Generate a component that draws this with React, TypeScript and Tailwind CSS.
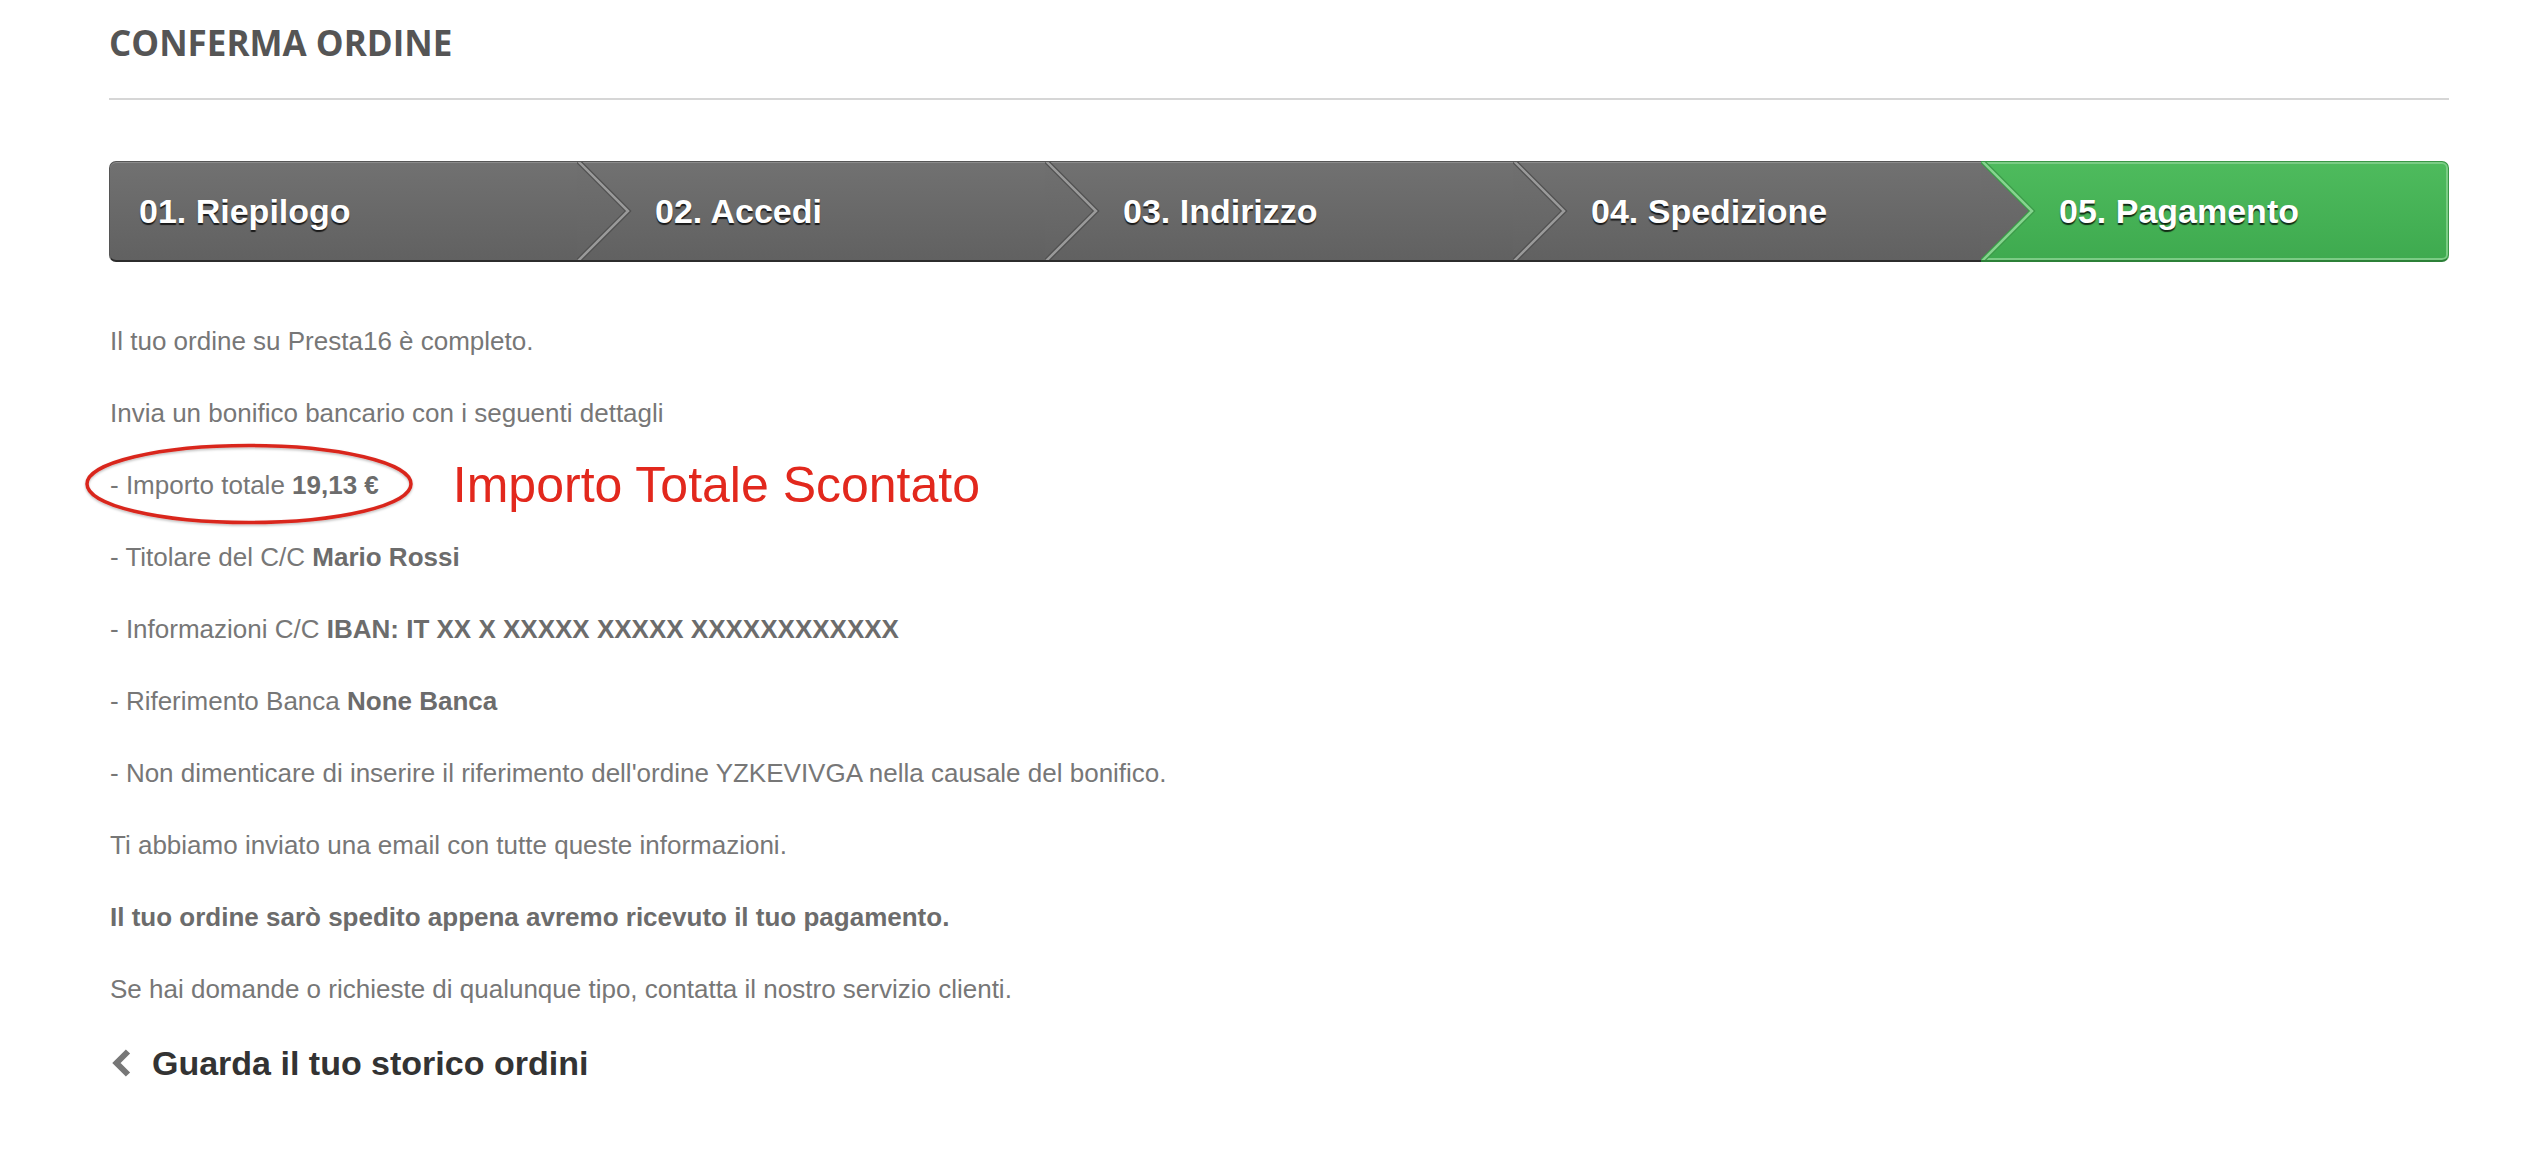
import React from "react";

const steps = ["01. Riepilogo", "02. Accedi", "03. Indirizzo", "04. Spedizione", "05. Pagamento"];

function Chevron({ idx, intoGreen }: { idx: number; intoGreen: boolean }) {
  const gid = `chev-grad-${idx}`;
  return (
    <svg
      className="absolute top-0 right-[-56px] z-10 h-full w-[56px]"
      viewBox="0 0 56 98"
      preserveAspectRatio="none"
    >
      <defs>
        <linearGradient id={gid} x1="0" y1="0" x2="0" y2="1">
          <stop offset="0" stopColor="#707070" />
          <stop offset="1" stopColor="#626262" />
        </linearGradient>
      </defs>
      <polygon points="0,0 51,49 0,98" fill={`url(#${gid})`} />
      <polyline
        points="0,-2 51,49 0,100"
        fill="none"
        stroke={intoGreen ? "#3b9a48" : "#505050"}
        strokeWidth="5"
      />
      <polyline
        points="0,-2 51,49 0,100"
        fill="none"
        stroke={intoGreen ? "#86d48f" : "#9a9a9a"}
        strokeWidth="2.5"
      />
    </svg>
  );
}

function Steps() {
  return (
    <div className="flex h-[101px]">
      {steps.map((s, i) => {
        const first = i === 0;
        const last = i === steps.length - 1;
        const base = "relative flex shrink-0 grow-0 basis-1/5 items-center border-t border-b-2";
        const pos = first ? " rounded-l-[7px] border-l pl-[29px]" : " pl-[78px]";
        const end = last ? " rounded-r-[7px] border-r" : "";
        const color = last
          ? " border-[#399646] border-b-[#2c8038] bg-linear-to-b from-[#4ebb5d] to-[#3eaa4f] shadow-[inset_0_0_0_2px_#7bcc85]"
          : " border-[#565656] border-b-[#2c2c2c] bg-linear-to-b from-[#717171] to-[#616161] shadow-[inset_0_1px_0_#8c8c8c]";
        return (
          <div key={s} className={base + pos + end + color}>
            <span className="relative z-20 font-['Liberation_Sans',Arial,sans-serif] text-[34px] font-bold leading-none text-white [text-shadow:0_2px_1px_rgba(0,0,0,0.75)]">
              {s}
            </span>
            {!last && <Chevron idx={i} intoGreen={i === steps.length - 2} />}
          </div>
        );
      })}
    </div>
  );
}

export default function App() {
  const p = "mb-[36px] leading-[36px]";
  const b = "font-bold text-[#6c6c6c]";
  return (
    <div className="min-h-[1172px] w-full bg-white pl-[109px] pr-[97px] pt-[25px] font-['Liberation_Sans',Arial,sans-serif] text-[26px] text-[#777777]">
      <h1 className="mb-[37px] font-['Open_Sans',sans-serif] text-[35px] font-bold leading-[36px] text-[#555555]">
        CONFERMA ORDINE
      </h1>
      <div className="h-[2px] w-full bg-[#d6d6d6]" />
      <div className="mt-[61px]">
        <Steps />
      </div>

      <div className="mt-[61px] pl-[1px]">
        <p className={p}>Il tuo ordine su Presta16 è completo.</p>
        <p className={p}>Invia un bonifico bancario con i seguenti dettagli</p>
        <div className="relative mb-[36px] flex h-[36px] items-center leading-[36px]">
          <svg
            className="pointer-events-none absolute left-[-27px] top-[-25px]"
            width="334"
            height="86"
            viewBox="0 0 334 86"
          >
            <defs>
              <filter id="ellShadow" x="-5%" y="-10%" width="110%" height="125%">
                <feDropShadow dx="0" dy="1.5" stdDeviation="1.2" floodColor="#000" floodOpacity="0.25" />
              </filter>
            </defs>
            <ellipse
              cx="166"
              cy="42"
              rx="162"
              ry="38.5"
              fill="none"
              stroke="#d9271e"
              strokeWidth="3.5"
              filter="url(#ellShadow)"
            />
          </svg>
          <span className="relative">
            - Importo totale <span className={b}>19,13 €</span>
          </span>
          <span className="ml-[74px] text-[50px] leading-none text-[#e2281d]">Importo Totale Scontato</span>
        </div>
        <p className={p}>
          - Titolare del C/C <span className={b}>Mario Rossi</span>
        </p>
        <p className={p}>
          - Informazioni C/C <span className={b}>IBAN: IT XX X XXXXX XXXXX XXXXXXXXXXXX</span>
        </p>
        <p className={p}>
          - Riferimento Banca <span className={b}>None Banca</span>
        </p>
        <p className={p}>
          - Non dimenticare di inserire il riferimento dell'ordine YZKEVIVGA nella causale del bonifico.
        </p>
        <p className={p}>Ti abbiamo inviato una email con tutte queste informazioni.</p>
        <p className={p + " " + b}>Il tuo ordine sarò spedito appena avremo ricevuto il tuo pagamento.</p>
        <p className={p}>Se hai domande o richieste di qualunque tipo, contatta il nostro servizio clienti.</p>

        <a className="mt-[10px] flex h-[40px] items-center gap-[19px]" href="#">
          <svg width="23" height="28" viewBox="0 0 23 28" className="shrink-0">
            <polyline
              points="18,2.5 6.5,14 18,25.5"
              fill="none"
              stroke="#777777"
              strokeWidth="6"
              strokeLinecap="butt"
              strokeLinejoin="miter"
            />
          </svg>
          <span className="text-[34px] font-bold leading-none text-[#333333]">Guarda il tuo storico ordini</span>
        </a>
      </div>
    </div>
  );
}
